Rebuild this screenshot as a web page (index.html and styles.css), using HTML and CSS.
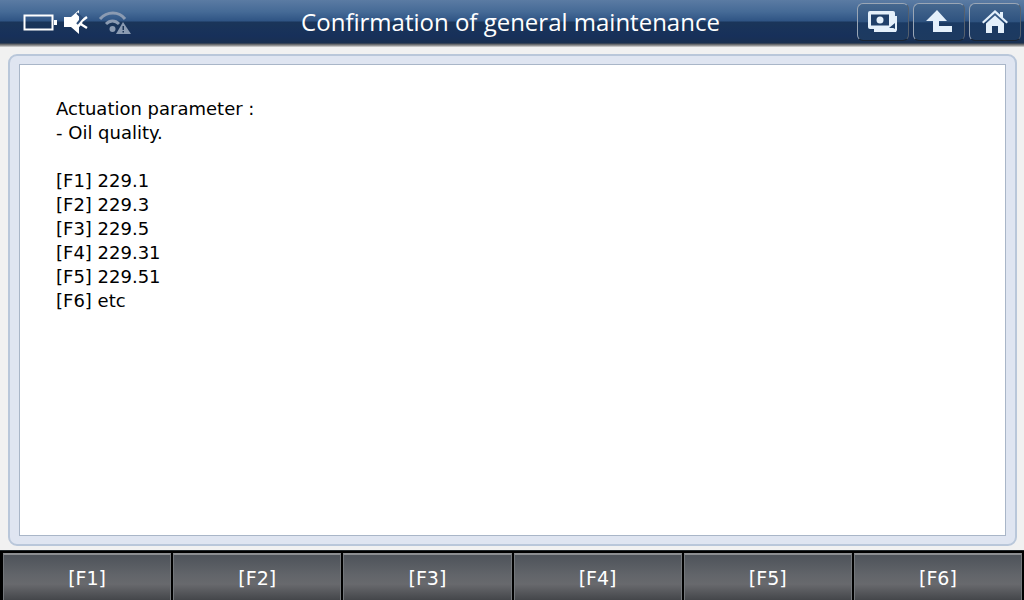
FILE: index.html
```html
<!DOCTYPE html>
<html lang="en">
<head>
<meta charset="utf-8">
<title>Confirmation of general maintenance</title>
<link rel="stylesheet" href="styles.css">
</head>
<body>
<div class="app">
  <header class="topbar">
    <div class="status">
      <svg class="ico-battery" width="36" height="20" viewBox="0 0 36 20"><rect x="1.5" y="3.5" width="28" height="14" fill="none" stroke="#fff" stroke-width="2"/><rect x="31" y="8" width="3" height="5" fill="#fff"/></svg>
      <svg class="ico-sound" width="26" height="24" viewBox="0 0 26 24"><path d="M1 7h7l8-7v24l-8-7H1z" fill="#fff"/><path d="M13 10l5 3-5 6M24 7l-8 6 8 5" fill="none" stroke="#fff" stroke-width="2.4"/><path d="M14 3l5 5-5 6" fill="none" stroke="#2d4d78" stroke-width="2"/></svg>
      <svg class="ico-wifi" width="34" height="26" viewBox="0 0 34 26"><g fill="none" stroke="#8b9bb2" stroke-width="3"><path d="M2 10C9 2 21 2 27 10"/><path d="M8 15c4-4 9-4 13 0"/></g><circle cx="14.500" cy="20" r="3" fill="#8b9bb2"/><path d="M25 13l8 12H18z" fill="#8b9bb2"/><rect x="24.500" y="17" width="1.500" height="4" fill="#1c3557"/><rect x="24.500" y="22" width="1.500" height="1.500" fill="#1c3557"/></svg>
    </div>
    <h1 class="title">Confirmation of general maintenance</h1>
    <div class="actions">
      <button class="tool"><svg width="32" height="26" viewBox="0 0 32 26"><path d="M5 5V22H28V7H5" fill="none"/><path d="M4 20h3v3h17l5-0 1-2V7h-2v13H4z" fill="#e4f0fb"/><rect x="1" y="2" width="27" height="18" rx="2" fill="#e4f0fb"/><rect x="4" y="5.500" width="18" height="11" fill="#20406a"/><circle cx="13" cy="11" r="3.500" fill="#e4f0fb"/><path d="M22 19l6-5v5z" fill="#20406a"/></svg></button>
      <button class="tool"><svg width="28" height="26" viewBox="0 0 28 26"><path d="M12 1L1 12h7v11h19v-6H14V12h8z" fill="#e4f0fb"/></svg></button>
      <button class="tool"><svg width="26" height="26" viewBox="0 0 26 26"><path d="M13 1L0 13l1.500 1.500L13 4l11.500 10.500L26 13l-5-4.600V3h-3v2.600z" fill="#e4f0fb"/><path d="M13 6.500L4 14.500V24h6v-7h6v7h6v-9.500z" fill="#e4f0fb"/></svg></button>
    </div>
  </header>
  <main class="panel">
    <div class="content">
      <p>Actuation parameter :</p>
      <p>- Oil quality.</p>
      <p class="blank">&nbsp;</p>
      <p>[F1] 229.1</p>
      <p>[F2] 229.3</p>
      <p>[F3] 229.5</p>
      <p>[F4] 229.31</p>
      <p>[F5] 229.51</p>
      <p>[F6] etc</p>
    </div>
  </main>
  <footer class="fbar">
    <button class="fkey">[F1]</button>
    <button class="fkey">[F2]</button>
    <button class="fkey">[F3]</button>
    <button class="fkey">[F4]</button>
    <button class="fkey">[F5]</button>
    <button class="fkey">[F6]</button>
  </footer>
</div>
</body>
</html>
```
FILE: styles.css
```css
* { box-sizing: border-box; }
html, body { margin: 0; padding: 0; }
body { width: 1024px; height: 600px; overflow: hidden; font-family: "DejaVu Sans", sans-serif; background: #f1f1f1; }
.app { width: 1024px; height: 600px; display: flex; flex-direction: column; }
.topbar {
  height: 47px; flex: none; display: grid; grid-template-columns: 1fr auto 1fr; align-items: center;
  padding: 0 3px 3px 0;
  background: linear-gradient(to bottom, #5b7ba3 0, #456a96 12px, #2f5484 21px, #1a3559 22px, #17305a 36px, #1a3050 43px, #55585c 44px, #a5a5a5 46px, #e0e0e0 47px);
}
.status { display: flex; align-items: center; padding-left: 23px; gap: 3px; }
.ico-battery { margin-right: 1px; }
.ico-sound { margin-right: 6px; }
.title { margin: 0; color: #fff; font-family: "Open Sans", sans-serif; font-weight: 400; font-size: 24px; line-height: 44px; white-space: nowrap; }
.actions { display: flex; justify-content: flex-end; gap: 4px; }
.tool {
  width: 52px; height: 38px; padding: 0; display: flex; align-items: center; justify-content: center;
  border: 1px solid #9aa6b5; border-bottom-color: #1b2533; border-right-color: #55606e; border-radius: 6px;
  background: linear-gradient(to bottom, #46688f 0, #2e527f 50%, #1b3a63 52%, #1d3a60 100%);
}
.panel { flex: 1; margin: 7px 7px 4px 8px; padding: 8px 9px 8px 9px; border: 2px solid #b9c7da; border-radius: 9px; background: #dfe5f1; display: flex; }
.content { flex: 1; background: #fff; border: 1px solid #a9b6c8; padding: 32px 36px; color: #000; font-size: 18px; line-height: 24px; }
.content p { margin: 0; }
.fbar { height: 50px; flex: none; display: flex; background: #000; padding: 2px 2px 0 3px; gap: 2px; border-top: 1px solid #22282b; }
.fkey {
  flex: 1; padding: 0; color: #fff; font: 400 19px "DejaVu Sans", sans-serif;
  border: 0; border-top: 2px solid #8c8e91; border-left: 1px solid #73777b; border-right: 1px solid #73777b;
  background: linear-gradient(to bottom, #4e535a 0, #62656a 45%, #68696d 65%, #44464a 100%);
}
```
